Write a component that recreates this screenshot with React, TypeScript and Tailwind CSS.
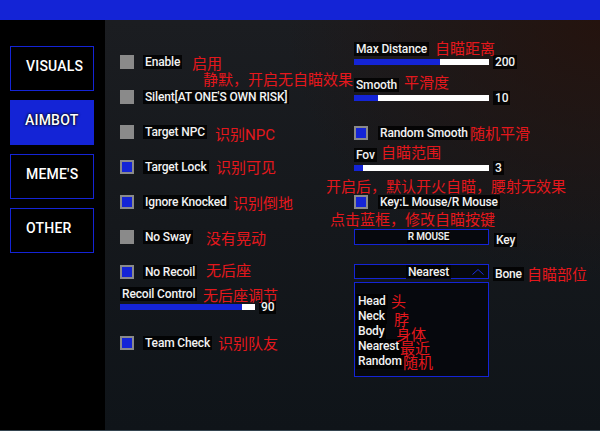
import clsx from "clsx";
import type { ReactNode } from "react";

const tabs = [
  { name: "VISUALS", active: false },
  { name: "AIMBOT", active: true },
  { name: "MEME'S", active: false },
  { name: "OTHER", active: false },
];

function Box({ on }: { on?: boolean }) {
  return on ? (
    <span className="h-[14px] w-[14px] shrink-0 border-2 border-[#8a8a8a] bg-[#1424d6]" />
  ) : (
    <span className="h-[14px] w-[14px] shrink-0 bg-[#8a8a8a]" />
  );
}

function Label({ children, className }: { children: ReactNode; className?: string }) {
  return (
    <span
      className={clsx(
        "whitespace-nowrap bg-black/80 px-[2px] text-[12px] leading-[14px] font-medium tracking-[-0.15px] text-[#f2f2f2]",
        className,
      )}
    >
      {children}
    </span>
  );
}

// red annotation text drawn over the menu
function Note({ children, className }: { children: ReactNode; className?: string }) {
  return (
    <span
      className={clsx(
        "pointer-events-none absolute whitespace-nowrap text-[15px] leading-[15px] text-[#e4171c]",
        className,
      )}
    >
      {children}
    </span>
  );
}

function Check({ label, on, gap }: { label: string; on?: boolean; gap?: string }) {
  return (
    <div className={clsx("flex h-[14px] items-center", gap ?? "gap-[9px]")}>
      <Box on={on} />
      <Label>{label}</Label>
    </div>
  );
}

function Slider({ label, value, pct }: { label: string; value: string; pct: number }) {
  return (
    <div className="flex flex-col items-start">
      <Label className="leading-[13px]">{label}</Label>
      <div className="flex h-[12px] items-center gap-[4px]">
        <div className="h-[6px] w-[135px] bg-white">
          <div className="h-full bg-[#1424d6]" style={{ width: `${pct}%` }} />
        </div>
        <Label className="leading-[12px]">{value}</Label>
      </div>
    </div>
  );
}

function Sidebar() {
  return (
    <div className="flex w-[105px] shrink-0 flex-col gap-[9px] bg-black pt-[26px] pl-[10px]">
      {tabs.map((t) => (
        <div
          key={t.name}
          className={clsx(
            "flex h-[45px] w-[84px] items-center pb-[5px] pl-[15px] text-[14px] font-medium tracking-[0.2px] text-white",
            t.active ? "bg-[#1424d6] [text-shadow:0_0_3px_#000,0_0_2px_#000]" : "border border-[#1424d6]",
          )}
        >
          {t.name}
        </div>
      ))}
    </div>
  );
}

function LeftColumn() {
  return (
    <div className="relative ml-[15px] w-[234px] shrink-0 pt-[35px]">
      <div className="flex flex-col gap-[21px]">
        <Check label="Enable" />
        <Check label="Silent[AT ONE'S OWN RISK]" />
        <Check label="Target NPC" />
        <Check label="Target Lock" on />
        <Check label="Ignore Knocked" on />
        <Check label="No Sway" />
        <Check label="No Recoil" on />
      </div>
      <div className="mt-[8px]">
        <Slider label="Recoil Control" value="90" pct={90} />
      </div>
      <div className="mt-[23px]">
        <Check label="Team Check" on />
      </div>

      <Note className="top-[37px] left-[72px]">启用</Note>
      <Note className="top-[53px] left-[83px]">静默，开启无自瞄效果</Note>
      <Note className="top-[108px] left-[95px]">识别NPC</Note>
      <Note className="top-[141px] left-[96px]">识别可见</Note>
      <Note className="top-[177px] left-[113px]">识别倒地</Note>
      <Note className="top-[212px] left-[86px]">没有晃动</Note>
      <Note className="top-[244px] left-[86px]">无后座</Note>
      <Note className="top-[269px] left-[83px]">无后座调节</Note>
      <Note className="top-[317px] left-[98px]">识别队友</Note>
    </div>
  );
}

function RightColumn() {
  const bones = ["Head", "Neck", "Body", "Nearest", "Random"];
  return (
    <div className="relative flex flex-1 flex-col items-start pt-[22px]">
      <Slider label="Max Distance" value="200" pct={64} />
      <div className="mt-[10px]">
        <Slider label="Smooth" value="10" pct={18} />
      </div>
      <div className="mt-[22px]">
        <Check label="Random Smooth" on gap="gap-[10px]" />
      </div>
      <div className="mt-[8px]">
        <Slider label="Fov" value="3" pct={7} />
      </div>
      <div className="mt-[21px]">
        <Check label="Key:L Mouse/R Mouse" on gap="gap-[10px]" />
      </div>

      <div className="mt-[20px] flex h-[16px] items-center gap-[5px]">
        <div className="flex h-[16px] w-[135px] items-center justify-center border border-[#1424d6] bg-[#06080d] pl-[14px]">
          <span className="bg-black/80 px-[1px] text-[10px] leading-[12px] font-semibold tracking-[-0.2px] text-[#eeeeee]">
            R MOUSE
          </span>
        </div>
        <Label className="relative top-[3px]">Key</Label>
      </div>

      <div className="mt-[19px] flex h-[15px] items-center gap-[4px]">
        <div className="relative flex h-[15px] w-[135px] items-center justify-center border border-[#1424d6] bg-[#06080d] pl-[14px]">
          <Label className="leading-[13px]">Nearest</Label>
          <svg className="absolute top-[4px] right-[4px]" width="12" height="6" viewBox="0 0 12 6">
            <polyline points="0.5,5.5 6,0.5 11.5,5.5" fill="none" stroke="#1a2ee0" strokeWidth="1" />
          </svg>
        </div>
        <Label className="relative top-[2px]">Bone</Label>
      </div>

      <div className="mt-[3px] flex h-[95px] w-[135px] flex-col items-start border border-[#1424d6] bg-[#06080d] pt-[11px] pl-[1px]">
        {bones.map((b) => (
          <Label key={b} className="px-[1px] leading-[15px]">
            {b}
          </Label>
        ))}
      </div>

      <Note className="top-[22px] left-[81px]">自瞄距离</Note>
      <Note className="top-[56px] left-[50px]">平滑度</Note>
      <Note className="top-[107px] left-[116px]">随机平滑</Note>
      <Note className="top-[126px] left-[27px]">自瞄范围</Note>
      <Note className="top-[160px] left-[-28px]">开启后，默认开火自瞄，腰射无效果</Note>
      <Note className="top-[193px] left-[-24px]">点击蓝框，修改自瞄按键</Note>
      <Note className="top-[248px] left-[173px]">自瞄部位</Note>
      <Note className="top-[275px] left-[37px]">头</Note>
      <Note className="top-[293px] left-[40px]">脖</Note>
      <Note className="top-[308px] left-[42px]">身体</Note>
      <Note className="top-[322px] left-[46px]">最近</Note>
      <Note className="top-[336px] left-[49px]">随机</Note>
    </div>
  );
}

export default function App() {
  return (
    <div className="flex h-[431px] w-[600px] flex-col overflow-hidden border-b border-[#34444f] bg-black font-['Roboto','Noto_Sans_CJK_SC',sans-serif]">
      <div className="h-[20px] shrink-0 bg-[#1424d6]" />
      <div className="flex h-[410px]">
        <Sidebar />
        <main className="flex flex-1 bg-[radial-gradient(ellipse_at_top_right,#24130e_0%,transparent_45%),linear-gradient(180deg,#1b1d21_0%,#15181c_50%,#0f1419_100%)]">
          <LeftColumn />
          <RightColumn />
        </main>
      </div>
    </div>
  );
}
